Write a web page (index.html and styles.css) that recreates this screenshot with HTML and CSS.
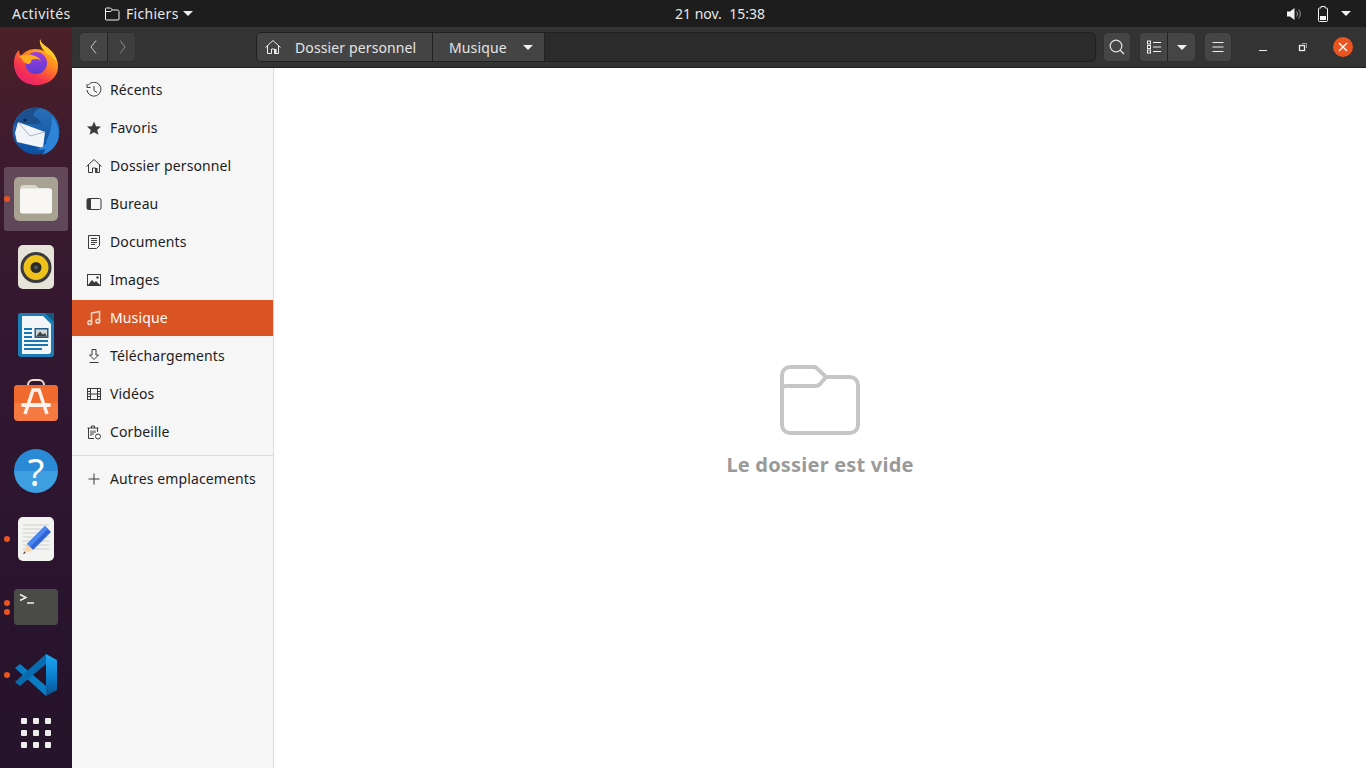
FILE: index.html
```html
<!DOCTYPE html>
<html lang="fr">
<head>
<meta charset="utf-8">
<title>Fichiers</title>
<link rel="stylesheet" href="styles.css">
</head>
<body>
<div class="desktop">
  <header class="topbar">
    <div class="top-left">
      <span class="top-activities">Activités</span>
      <span class="top-app">
        <svg class="i16" viewBox="0 0 16 16" fill="none" stroke="#f2f2f2" stroke-width="1"><path d="M1.500 13V3a1 1 0 0 1 1-1h4l2 2h5a1.500 1.500 0 0 1 1.500 1.500V13a1 1 0 0 1-1 1h-11.500a1 1 0 0 1-1-1z"/><path d="M1.500 5.500h5l2-1.500"/></svg>
        <span class="top-name">Fichiers</span>
        <i class="caret"></i>
      </span>
    </div>
    <div class="clock">21 nov.&nbsp;&nbsp;15:38</div>
    <div class="top-right">
      <svg class="i16" viewBox="0 0 16 16"><path d="M1 5.500h3L8.500 2v12L4 10.500H1z" fill="#f2f2f2"/><path d="M10.500 5.500a3.500 3.500 0 0 1 0 5M12.500 3.500a6.500 6.500 0 0 1 0 9" fill="none" stroke="#9a9a9a" stroke-width="1"/></svg>
      <svg class="i16 batt" viewBox="0 0 16 16"><path d="M6 .5h4V2h1.500a1 1 0 0 1 1 1v11.500a1 1 0 0 1-1 1h-7a1 1 0 0 1-1-1V3a1 1 0 0 1 1-1H6z" fill="none" stroke="#f2f2f2"/><rect x="5" y="10" width="6" height="4" fill="#f2f2f2"/></svg>
      <i class="caret"></i>
    </div>
  </header>

  <div class="workspace">
    <nav class="dock">
      <div class="dock-item">
        <svg class="app fox" viewBox="0 0 46 46">
          <defs>
            <linearGradient id="ff" x1=".85" y1="0" x2=".25" y2="1"><stop offset="0" stop-color="#ffd22e"/><stop offset=".42" stop-color="#ff8a1f"/><stop offset=".75" stop-color="#f5344f"/><stop offset="1" stop-color="#e8206f"/></linearGradient>
            <linearGradient id="ffp" x1="0" y1="0" x2="0" y2="1"><stop offset="0" stop-color="#a13fe0"/><stop offset="1" stop-color="#5b3ad0"/></linearGradient>
          </defs>
          <path d="M1 24C1 18 3 14 6 11c0 3 1 5 2 6 3-4 8-7 14-7 4 0 8 1 11 3C30 9 26 5 27 0c1 6 9 8 13 14 4 5 5 10 5 14 0 10-9 18-22 18S1 37 1 24z" fill="url(#ff)"/>
          <circle cx="23" cy="24" r="11" fill="url(#ffp)"/>
          <path d="M6 17c4-1 9-2 13-1 4 1 8 3 9 6-3-3-7-2-10-1 1 1 0 3-2 4-3 0-6-2-7-5-1-1-2-2-3-3z" fill="#ffab1f"/>
          <path d="M27 0c1 6 9 8 13 14 3 4 4 8 5 12-2-5-6-9-10-11-5-3-9-9-8-15z" fill="#ffc72a"/>
        </svg>
      </div>
      <div class="dock-item">
        <svg class="app" viewBox="0 0 48 48">
          <defs><linearGradient id="tb" x1="0" y1="0" x2="0" y2="1"><stop offset="0" stop-color="#2a70b8"/><stop offset="1" stop-color="#0a4fa0"/></linearGradient></defs>
          <circle cx="24" cy="24" r="23.500" fill="url(#tb)"/>
          <path d="M2 18C5 7 16-1 28 1c-4 2-6 4-7 8 4 1 7 4 8 8H10c-3 0-6 0-8 1z" fill="#1b4f8e"/>
          <circle cx="13" cy="13" r="1.500" fill="#0b2240"/>
          <path d="M6 15l27 10-2 16-26-6-2-9z" fill="#f3f4f8"/>
          <path d="M6 15l12 14 15-4" fill="none" stroke="#a9b4c4" stroke-width="1"/>
          <path d="M40 9c6 8 8 16 6 24-2 7-9 13-16 15 2-2 3-4 3-6-3 1-6 1-8 0 5-1 9-4 10-8l-2 1c4-4 7-14 7-26z" fill="#2d84d8"/>
        </svg>
      </div>
      <div class="dock-item active">
        <i class="dot"></i>
        <svg class="app" viewBox="0 0 44 44">
          <rect width="44" height="44" rx="5" fill="#a8a292"/>
          <path d="M6 12a4 4 0 0 1 4-4h11l4 3h9a4 4 0 0 1 4 4v3H6z" fill="#d9d6cb"/>
          <rect x="6" y="11.500" width="32" height="25" rx="2.500" fill="#f8f7f3"/>
        </svg>
      </div>
      <div class="dock-item">
        <svg class="app narrow" viewBox="0 0 36 44">
          <rect width="36" height="44" rx="5" fill="#e6e3d8"/>
          <circle cx="18" cy="22.500" r="15.500" fill="#3a3a40"/>
          <circle cx="18" cy="22.500" r="12.500" fill="#eec21b"/>
          <circle cx="18" cy="22.500" r="5.500" fill="#2b2b2b"/>
          <circle cx="18" cy="22.500" r="2" fill="#555"/>
        </svg>
      </div>
      <div class="dock-item">
        <svg class="app narrow" viewBox="0 0 36 44">
          <path d="M3 0h33v41a3 3 0 0 1-3 3H3a3 3 0 0 1-3-3V3a3 3 0 0 1 3-3z" fill="#1a7db5"/>
          <path d="M4 3h21l8 8v27a3 3 0 0 1-3 3H4z" fill="#f2f6f8"/>
          <path d="M27 0h9v9z" fill="#16587f"/>
          <path d="M6 16h8M6 20h8M6 24h8M6 28h24M6 32h24M6 36h18" stroke="#1a76ad" stroke-width="2" fill="none"/>
          <rect x="16.500" y="15" width="14" height="10" fill="#245e85"/>
          <rect x="18" y="16.500" width="11" height="7" fill="#cfd8dc"/>
          <path d="M18 23.500l4-5 3 3 2-1.500 2 3.500z" fill="#444"/>
        </svg>
      </div>
      <div class="dock-item">
        <svg class="app store" viewBox="0 0 44 42">
          <path d="M14 8V6a5 5 0 0 1 5-5h6a5 5 0 0 1 5 5v2" fill="none" stroke="#f2dfcf" stroke-width="2"/>
          <rect y="6" width="44" height="36" rx="4" fill="#f47a42"/>
          <path d="M0 10a4 4 0 0 1 4-4h36a4 4 0 0 1 4 4v14H0z" fill="#f06a2d"/>
          <path d="M11 35l8-24h6l8 24" fill="none" stroke="#fdf1ea" stroke-width="3.500"/>
          <path d="M9 26h26" fill="none" stroke="#fdf1ea" stroke-width="4" stroke-linecap="round"/>
        </svg>
      </div>
      <div class="dock-item">
        <div class="help"><span>?</span></div>
      </div>
      <div class="dock-item">
        <i class="dot"></i>
        <svg class="app narrow" viewBox="0 0 36 44">
          <rect width="36" height="44" rx="5" fill="#f3f3f1"/>
          <path d="M5 8h26M5 12h26M5 16h26M5 20h26M5 24h26M5 28h26M5 32h26" stroke="#cfcfcf" stroke-width="1"/>
          <path d="M27 9l6 6-18 18-6-6z" fill="#2f64d8"/>
          <path d="M27 9l3 3-18 18-3-3z" fill="#4b86ee"/>
          <path d="M9 27l6 6-10 4z" fill="#f5d6ae"/>
          <path d="M6.500 34.500l-1.500 2.500 2.500-1z" fill="#333"/>
        </svg>
      </div>
      <div class="dock-item">
        <i class="dot upper"></i><i class="dot lower"></i>
        <svg class="app term" viewBox="0 0 44 36">
          <rect width="44" height="36" rx="3.500" fill="#4a4a48"/>
          <path d="M6 5.500l6 3-6 3M13 14h7" fill="none" stroke="#f0f0f0" stroke-width="1.400"/>
        </svg>
      </div>
      <div class="dock-item">
        <i class="dot"></i>
        <svg class="app" viewBox="0 0 44 44">
          <defs><linearGradient id="vs" x1="0" y1="0" x2="0" y2="1"><stop offset="0" stop-color="#1fa8f0"/><stop offset=".6" stop-color="#0a7ac8"/><stop offset="1" stop-color="#0a4f8a"/></linearGradient></defs>
          <path d="M1 15l5-4 26 22v10z" fill="#0a7cc4"/>
          <path d="M32 1L1 29l5 4 26-22z" fill="#0a6cb0"/>
          <path d="M32 1l11 6v30l-11 6z" fill="url(#vs)"/>
        </svg>
      </div>
      <div class="apps-grid">
        <i></i><i></i><i></i><i></i><i></i><i></i><i></i><i></i><i></i>
      </div>
    </nav>

    <div class="window">
      <div class="headerbar">
        <div class="btn-group nav-group">
          <button class="hbtn"><svg class="i16" viewBox="0 0 16 16"><path d="M10 1.500L5 8l5 6.500" fill="none" stroke="#c8c8c8"/></svg></button>
          <button class="hbtn off"><svg class="i16" viewBox="0 0 16 16"><path d="M6 1.500L11 8l-5 6.500" fill="none" stroke="#8a8a8a"/></svg></button>
        </div>
        <div class="pathbar">
          <div class="crumb home">
            <svg class="i16" viewBox="0 0 16 16" fill="none" stroke="#f0f0f0"><path d="M.5 8.500L8 1.500l7.500 7M2.500 7v7.500h4V10h3v4.500h4V7"/><rect x="9.500" y="10" width="2" height="4.500" fill="#f0f0f0" stroke="none"/></svg>
            <span>Dossier personnel</span>
          </div>
          <div class="crumb current"><span>Musique</span><i class="caret"></i></div>
        </div>
        <button class="hbtn solo"><svg class="i16" viewBox="0 0 16 16" fill="none" stroke="#e6e6e6" stroke-width="1.200"><circle cx="7" cy="7" r="5.800"/><path d="M11 11l4 4"/></svg></button>
        <div class="btn-group view-group">
          <button class="hbtn"><svg class="i16" viewBox="0 0 16 16" fill="none" stroke="#eee"><path d="M7 3.500h8M7 8h8M7 12.500h8"/><rect x="1.500" y="2" width="3" height="3"/><rect x="1.500" y="6.500" width="3" height="3"/><rect x="1.500" y="11" width="3" height="3"/></svg></button>
          <button class="hbtn"><i class="caret"></i></button>
        </div>
        <button class="hbtn solo"><svg class="i16" viewBox="0 0 16 16" fill="none" stroke="#eee"><path d="M2.500 3.500h11M2.500 8h11M2.500 12.500h11"/></svg></button>
        <div class="wm">
          <span class="wm-btn"><svg class="i16" viewBox="0 0 16 16"><path d="M4 11.500h8" stroke="#eee"/></svg></span>
          <span class="wm-btn"><svg class="i16" viewBox="0 0 16 16" fill="none" stroke="#eee"><rect x="4.500" y="6.500" width="5" height="5" stroke-width="1.300"/><path d="M7 4.500h4.500V9" stroke="#999"/></svg></span>
          <span class="wm-btn close"><svg class="i10" viewBox="0 0 10 10"><path d="M1 1l8 8M9 1L1 9" stroke="#fff" stroke-width="1.300"/></svg></span>
        </div>
      </div>

      <div class="content">
        <aside class="sidebar">
          <a class="row"><svg class="i16" viewBox="0 0 16 16" fill="none" stroke="#3a3a3a"><path d="M2 3.500A7 7 0 1 1 1 8"/><path d="M1 2v3.500h3.500" /><path d="M8 4v4.500l3 2"/></svg><span>Récents</span></a>
          <a class="row"><svg class="i16" viewBox="0 0 16 16"><path d="M8 1.500l2 4.700 5 .4-3.800 3.300 1.200 4.900L8 12.200l-4.400 2.600 1.200-4.900L1 6.600l5-.4z" fill="#3a3a3a"/></svg><span>Favoris</span></a>
          <a class="row"><svg class="i16" viewBox="0 0 16 16" fill="none" stroke="#3a3a3a"><path d="M.5 8.500L8 1.500l7.500 7M2.500 7v7.500h4V10h3v4.500h4V7"/><rect x="9.500" y="10" width="2" height="4.500" fill="#3a3a3a" stroke="none"/></svg><span>Dossier personnel</span></a>
          <a class="row"><svg class="i16" viewBox="0 0 16 16"><rect x="1" y="2.500" width="14" height="11" rx="1.500" fill="none" stroke="#3a3a3a"/><path d="M2.500 2.500H5v11H2.500A1.500 1.500 0 0 1 1 12V4a1.500 1.500 0 0 1 1.500-1.500z" fill="#3a3a3a"/></svg><span>Bureau</span></a>
          <a class="row"><svg class="i16" viewBox="0 0 16 16" fill="none" stroke="#3a3a3a"><path d="M2.500 1.500h11v10l-3 3h-8z"/><path d="M5 4.500h6M5 6.500h6M5 8.500h6M5 10.500h4"/></svg><span>Documents</span></a>
          <a class="row"><svg class="i16" viewBox="0 0 16 16"><rect x="1.500" y="2.500" width="13" height="11" fill="none" stroke="#3a3a3a"/><path d="M2 13l4-5 2.500 2.500L10 9l4 4z" fill="#3a3a3a"/><circle cx="11.500" cy="5.500" r="1.200" fill="#3a3a3a"/></svg><span>Images</span></a>
          <a class="row selected"><svg class="i16" viewBox="0 0 16 16" fill="none" stroke="#f6dacb"><path d="M5.500 12.500V3l8-1.500V11" stroke-width="1.500"/><circle cx="3.800" cy="12.700" r="1.900" stroke-width="1.500"/><circle cx="11.800" cy="11.200" r="1.900" stroke-width="1.500"/></svg><span>Musique</span></a>
          <a class="row"><svg class="i16" viewBox="0 0 16 16" fill="none" stroke="#3a3a3a"><path d="M6 1.500h4V7h2.500L8 11.500 3.500 7H6zM3.500 14.500h9"/></svg><span>Téléchargements</span></a>
          <a class="row"><svg class="i16" viewBox="0 0 16 16" fill="none" stroke="#3a3a3a"><rect x="1.500" y="2.500" width="13" height="11"/><path d="M4.500 2.500v11M11.500 2.500v11M4.500 8h7M1.500 5.500h3M1.500 8h3M1.500 10.500h3M11.500 5.500h3M11.500 8h3M11.500 10.500h3"/></svg><span>Vidéos</span></a>
          <a class="row"><svg class="i16" viewBox="0 0 16 16" fill="none" stroke="#3a3a3a"><path d="M1.500 4h11M5.500 4V2h3v2M2.500 4v10.500H8M11.500 4v4M5 6.500V12M7 6.500V11M9 6.500V9"/><circle cx="12" cy="12.500" r="2.500"/></svg><span>Corbeille</span></a>
          <hr class="sep">
          <a class="row"><svg class="i16" viewBox="0 0 16 16"><path d="M8 2.500v11M2.500 8h11" stroke="#3a3a3a" fill="none"/></svg><span>Autres emplacements</span></a>
        </aside>
        <main class="empty">
          <svg class="empty-icon" viewBox="0 0 80 70" fill="none" stroke="#c6c6c6" stroke-width="4">
            <path d="M2 60V10a8 8 0 0 1 8-8h24a4 4 0 0 1 3 1.500l9 8.500h24a8 8 0 0 1 8 8v40a8 8 0 0 1-8 8H10a8 8 0 0 1-8-8z"/>
            <path d="M2 24c0-2 2-3 5-3h29c2 0 3-1 4-2l6-7"/>
          </svg>
          <div class="empty-label">Le dossier est vide</div>
        </main>
      </div>
    </div>
  </div>
</div>
</body>
</html>
```
FILE: styles.css
```css
* { box-sizing: border-box; }
html, body { margin: 0; height: 100%; overflow: hidden; }
body { font-family: "Noto Sans", "Open Sans", sans-serif; font-size: 14px; letter-spacing: .12px; }
svg { display: block; flex: none; }
.i16 { width: 16px; height: 16px; }
.i10 { width: 10px; height: 10px; }

.desktop { width: 1366px; height: 768px; display: flex; flex-direction: column; }

.topbar {
  height: 27px; flex: none; background: #1d1d1d; color: #e8e8e8;
  display: grid; grid-template-columns: 1fr auto 1fr; align-items: center;
}
.top-left { display: flex; align-items: center; padding-left: 12px; }
.top-activities { width: 92px; letter-spacing: .45px; }
.top-app { display: flex; align-items: center; gap: 6px; }
.top-name { letter-spacing: .3px; }
.top-app .caret { margin-left: -2px; }
.clock { margin-left: 74px; letter-spacing: 0; }
.top-right { display: flex; align-items: center; justify-content: flex-end; padding-right: 15px; }
.batt { margin-left: 13px; margin-right: 10px; }
.caret {
  display: block; width: 0; height: 0; flex: none;
  border-left: 5px solid transparent; border-right: 5px solid transparent; border-top: 5px solid #f0f0f0;
}

.workspace { flex: 1; display: flex; min-height: 0; }

.dock {
  width: 72px; flex: none; padding-top: 2px;
  background: linear-gradient(180deg, #4c2027 0%, #3a1a30 22%, #2f1630 55%, #24132a 100%);
  display: flex; flex-direction: column; align-items: center;
}
.dock-item { position: relative; width: 64px; height: 68px; display: flex; align-items: center; justify-content: center; }
.dock-item.active::before {
  content: ""; position: absolute; left: 0; top: 2px; width: 64px; height: 64px;
  border-radius: 3px; background: rgba(255,255,255,.2);
}
.dock-item .app { position: relative; width: 46px; height: 46px; }
.dock-item .app.fox { margin-bottom: 2px; }
.dock-item:nth-child(2) .app { width: 48px; height: 48px; }
.dock-item:nth-child(n+3) .app { width: 44px; height: 44px; }
.dock-item .app.narrow { width: 36px; height: 44px; }
.dock-item .app.term { width: 44px; height: 36px; }
.dock-item .app.store { width: 44px; height: 42px; margin-bottom: 6px; }
.dot {
  position: absolute; left: 0; top: 31px; width: 6px; height: 6px; border-radius: 50%;
  background: #e95420; z-index: 1;
}
.dot.upper { top: 27px; }
.dot.lower { top: 36px; }
.help {
  width: 44px; height: 44px; border-radius: 50%;
  background: linear-gradient(180deg, #2a8ad6 50%, #3d9fdf 50%);
  display: flex; align-items: center; justify-content: center;
  color: #fff; font-size: 38px; line-height: 38px; letter-spacing: 0;
}

.apps-grid {
  margin-top: 9px; width: 30px; display: grid; grid-template-columns: repeat(3, 6px); gap: 6px;
}
.apps-grid i { display: block; width: 6px; height: 6px; border-radius: 1px; background: #ececec; }

.window { flex: 1; display: flex; flex-direction: column; min-width: 0; }

.headerbar {
  height: 41px; flex: none; background: #333333; border-bottom: 1px solid #1f1f1f;
  display: flex; align-items: center; padding-left: 7px;
}
.btn-group { display: flex; }
.hbtn {
  width: 29px; height: 30px; padding: 0; background: #454545; color: #eee;
  border: 1px solid #303030; display: flex; align-items: center; justify-content: center;
}
.hbtn:first-child { border-radius: 5px 0 0 5px; border-right-color: #242424; }
.hbtn:last-child { border-radius: 0 5px 5px 0; margin-left: -1px; border-left-color: #242424; }
.hbtn.solo { border-radius: 5px; margin: 0; width: 28px; border-color: #303030; }
.hbtn.off { background: #3e3e3e; }
.nav-group { margin-right: 120px; }

.pathbar {
  width: 840px; height: 30px; display: flex; background: #2b2b2b;
  border: 1px solid #202020; border-radius: 5px; margin-right: 7px; color: #e4e4e4;
}
.crumb { height: 100%; background: #444444; display: flex; align-items: center; border-right: 1px solid #222; }
.crumb.home { width: 176px; padding-left: 8px; gap: 14px; border-radius: 4px 0 0 4px; }
.crumb.current { width: 112px; padding-left: 16px; gap: 16px; }
.view-group { margin: 0 8px; }

.wm { display: flex; margin-left: 11px; }
.wm-btn { width: 40px; height: 30px; display: flex; align-items: center; justify-content: center; }
.wm-btn.close::before {
  content: ""; position: absolute; width: 20px; height: 20px; border-radius: 50%; background: #e95420;
}
.wm-btn svg { position: relative; }

.content { flex: 1; display: flex; min-height: 0; }

.sidebar {
  width: 202px; flex: none; background: #f6f6f6; border-right: 1px solid #dcdcdc;
  padding-top: 4px; display: flex; flex-direction: column; gap: 2px; color: #1c1c1c;
}
.row { height: 36px; display: flex; align-items: center; gap: 8px; padding-left: 14px; }
.row span { margin-bottom: 2px; }
.row.selected { background: #da5322; color: #fff; }
.sep { margin: 3px 0; width: 100%; border: 0; border-top: 1px solid #dcdcdc; height: 0; }

.empty { flex: 1; background: #fff; display: flex; flex-direction: column; align-items: center; justify-content: center; padding-top: 7px; }
.empty-icon { width: 80px; height: 70px; }
.empty-label { margin-top: 16px; font-size: 20px; font-weight: 700; color: #9a9a9a; letter-spacing: .2px; }
```
